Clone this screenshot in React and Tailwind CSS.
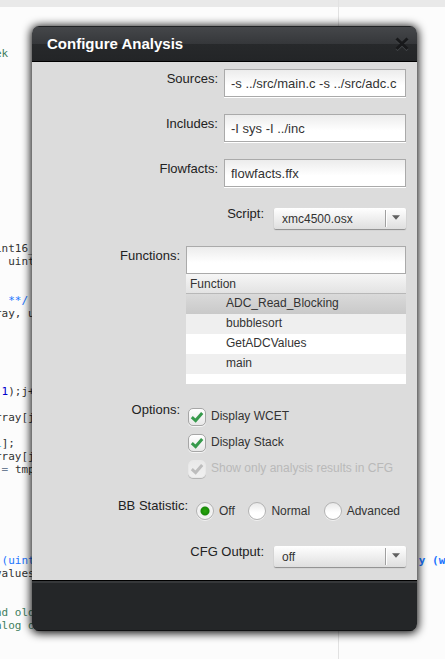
import React from "react";

const codeLines = {
  3: [["ek", "text-[#3f7f5f]"]],
  18: [["int16_t", "text-[#333333]"]],
  19: [[", uint16", "text-[#333333]"]],
  22: [["  **/", "text-[#1a75ff]"]],
  23: [["ray, uint", "text-[#333333]"]],
  29: [[" 1", "text-[#0000cd]"], [");j++", "text-[#333333]"]],
  31: [["rray[j]", "text-[#333333]"]],
  33: [["i", "text-[#38b0de]"], ["];", "text-[#333333]"]],
  34: [["rray[j]", "text-[#333333]"]],
  35: [[" = ", "text-[#6f7f95]"], ["tmp", "text-[#333333]"]],
  42: [
    [" (uint16_t", "text-[#1a75ff]"],
    [" ".repeat(54), ""],
    ["y (w", "font-bold text-[#1a75ff]"],
    ["a", "font-bold text-[#c040e0]"],
  ],
  43: [["values", "text-[#333333]"]],
  46: [["nd old", "text-[#3f7f5f]"]],
  47: [["alog o", "text-[#3f7f5f]"]],
};

const inputClass =
  "block h-7 w-full min-w-0 border border-[#aaaaaa] bg-linear-to-b from-[#ececec] to-white to-60% px-1.5 text-[13px] text-[#333333] outline-none";

function Editor() {
  return (
    <div className="min-h-screen overflow-hidden bg-[#fcfcfc]">
      <div className="h-2 border-b border-[#fcfcfc] bg-[#e9e9e9]" />
      <pre className="-ml-[5px] font-['DejaVu_Sans_Mono',monospace] text-[11px] leading-[13px]">
        {Array.from({ length: 50 }, (_, i) => (
          <div key={i} className="h-[13px]">
            {(codeLines[i] || []).map(([text, color], j) => (
              <span key={j} className={color}>
                {text}
              </span>
            ))}
          </div>
        ))}
      </pre>
    </div>
  );
}

function TextRow({ id, label, value }) {
  return (
    <div className="flex items-start gap-1.5">
      <label htmlFor={id} className="w-[186px] shrink-0 pt-0.5 text-right">
        {label}
      </label>
      <div className="min-w-0 flex-1 shadow-[0_1px_0_#ffffff]">
        <input id={id} type="text" defaultValue={value} className={inputClass} />
      </div>
    </div>
  );
}

function SelectRow({ id, label, value }) {
  return (
    <div className="flex items-start gap-2.5">
      <label htmlFor={id} className="w-[232px] shrink-0 text-right leading-[11px]">
        {label}
      </label>
      <div className="relative min-w-0 flex-1">
        <select
          id={id}
          defaultValue={value}
          className="block h-[21px] w-full appearance-none rounded-[2px] bg-linear-to-b from-white to-[#dfdfdf] pr-7 pl-2 text-[12px] text-[#333333] shadow-[0_1px_1px_#8c8c8c] outline-none"
        >
          <option value={value}>{value}</option>
        </select>
        <span className="pointer-events-none absolute inset-y-0.5 right-0 flex w-[21px] items-center justify-center border-l border-[#a0a0a0] shadow-[inset_1px_0_0_#ffffff]">
          <svg width="8" height="5" viewBox="0 0 8 5" className="mb-0.5">
            <path d="M0 0.2h8L4 4.8z" fill="#606060" />
          </svg>
        </span>
      </div>
    </div>
  );
}

function Check({ id, label, disabled }) {
  return (
    <div className="flex h-[26px] items-start gap-[5px]">
      <div className="relative size-[18px] shrink-0">
        <input
          id={id}
          type="checkbox"
          defaultChecked
          disabled={disabled}
          className="block size-[18px] appearance-none rounded-[5px] border border-[#a6a6a6] bg-linear-to-b from-white to-[#e8e8e8] shadow-[0_1px_0_#f5f5f5] disabled:border-[#e8e8e8] disabled:from-[#e9e9e9] disabled:to-[#f0f0f0] disabled:shadow-[0_1px_0_#b5b5b5]"
        />
        <svg
          className="pointer-events-none absolute inset-0"
          width="18"
          height="18"
          viewBox="0 0 18 18"
          fill="none"
        >
          <path
            d="M3.8 9.2L7.6 12.6L14.2 5"
            stroke={disabled ? "#bdbdbd" : "#379a4c"}
            strokeWidth="3"
          />
        </svg>
      </div>
      <label
        htmlFor={id}
        className={
          disabled
            ? "text-[12px] leading-4 text-[#b9b9b9]"
            : "text-[12px] leading-4 text-[#333333]"
        }
      >
        {label}
      </label>
    </div>
  );
}

function Radio({ id, label, checked }) {
  return (
    <div className="flex items-center gap-[5px]">
      <input
        id={id}
        type="radio"
        name="bb-statistic"
        defaultChecked={checked}
        className="block size-[18px] shrink-0 appearance-none rounded-full border border-[#b2b2b2] bg-linear-to-b from-[#e9e9e9] to-white to-60% shadow-[0_1px_0_#f0f0f0] checked:bg-[radial-gradient(circle,#2ba80c_0,#188a08_4px,#eeeeee_5px,#f5f5f5_8px)]"
      />
      <label htmlFor={id} className="text-[12px] leading-4 text-[#333333]">
        {label}
      </label>
    </div>
  );
}

const functions = [
  { name: "ADC_Read_Blocking", row: "bg-linear-to-b from-[#dadada] to-[#c9c9c9]" },
  { name: "bubblesort", row: "bg-[#efefef]" },
  { name: "GetADCValues", row: "bg-white" },
  { name: "main", row: "bg-[#efefef]" },
];

function Dialog() {
  return (
    <section
      role="dialog"
      aria-labelledby="dialog-title"
      className="absolute top-[26px] right-7 left-8 overflow-hidden rounded-[7px] bg-[#dcdcdc] shadow-[0_1px_10px_1px_#000000]"
    >
      <header className="flex h-9 items-center justify-between border-t border-b border-t-[#202224] border-b-black bg-[linear-gradient(to_bottom,#45474a_0,#35373a_17px,#27292b_17px,#232527_100%)] pr-2 pl-[15px]">
        <h1 id="dialog-title" className="text-[15px] font-bold text-white">
          Configure Analysis
        </h1>
        <button type="button" aria-label="Close" className="block">
          <svg width="14" height="14" viewBox="0 0 14 14" fill="none">
            <path d="M1.5 2.5L12.5 13M12.5 2.5L1.5 13" stroke="#44474a" strokeWidth="3" />
            <path d="M1.5 1.5L12.5 12M12.5 1.5L1.5 12" stroke="#18191b" strokeWidth="3" />
          </svg>
        </button>
      </header>

      <form className="pt-[7px] pr-[11px] pb-[13px] text-[13px] leading-4 text-[#222222]">
        <div className="flex flex-col gap-[17px]">
          <TextRow id="sources" label="Sources:" value="-s ../src/main.c -s ../src/adc.c" />
          <TextRow id="includes" label="Includes:" value="-I sys -I ../inc" />
          <TextRow id="flowfacts" label="Flowfacts:" value="flowfacts.ffx" />
        </div>

        <div className="mt-[21px]">
          <SelectRow id="script" label="Script:" value="xmc4500.osx" />
        </div>

        <div className="mt-[17px] flex items-start gap-1.5">
          <label htmlFor="functions" className="w-[148px] shrink-0 pt-0.5 text-right">
            Functions:
          </label>
          <div className="min-w-0 flex-1 bg-white pb-2.5">
            <input id="functions" type="text" className={inputClass} />
            <table className="w-full border-separate border-spacing-0 text-[12px] leading-4 text-[#333333]">
              <thead>
                <tr className="bg-linear-to-b from-[#f6f6f6] to-[#e2e2e2]">
                  <th
                    scope="col"
                    className="h-5 border-b border-[#b8b8b8] p-0 pl-1 text-left font-normal"
                  >
                    Function
                  </th>
                </tr>
              </thead>
              <tbody>
                {functions.map((f) => (
                  <tr key={f.name} className={f.row}>
                    <td className="h-5 p-0 pb-0.5 pl-10">{f.name}</td>
                  </tr>
                ))}
              </tbody>
            </table>
          </div>
        </div>

        <fieldset className="mt-6 flex items-start gap-2">
          <span className="-mt-1.5 w-[148px] shrink-0 text-right">Options:</span>
          <div className="min-w-0 flex-1">
            <Check id="wcet" label="Display WCET" />
            <Check id="stack" label="Display Stack" />
            <Check id="cfg-only" label="Show only analysis results in CFG" disabled />
          </div>
        </fieldset>

        <fieldset className="mt-4 flex items-start gap-2">
          <span className="-mt-1 w-[156px] shrink-0 text-right">BB Statistic:</span>
          <div className="flex flex-1 justify-between pr-1.5">
            <Radio id="bb-off" label="Off" checked />
            <Radio id="bb-normal" label="Normal" />
            <Radio id="bb-advanced" label="Advanced" />
          </div>
        </fieldset>

        <div className="mt-[26px]">
          <SelectRow id="cfg-output" label="CFG Output:" value="off" />
        </div>
      </form>

      <footer className="h-[51px] border-t border-b border-t-black border-b-[#101112] bg-[#242628] shadow-[inset_0_2px_0_#36383a]" />
    </section>
  );
}

export default function App() {
  return (
    <main className="relative min-h-screen overflow-hidden font-['Liberation_Sans',Arial,sans-serif]">
      <Editor />
      <div className="absolute inset-y-0 left-[338px] w-px bg-[#e2e2e2]" />
      <Dialog />
    </main>
  );
}
